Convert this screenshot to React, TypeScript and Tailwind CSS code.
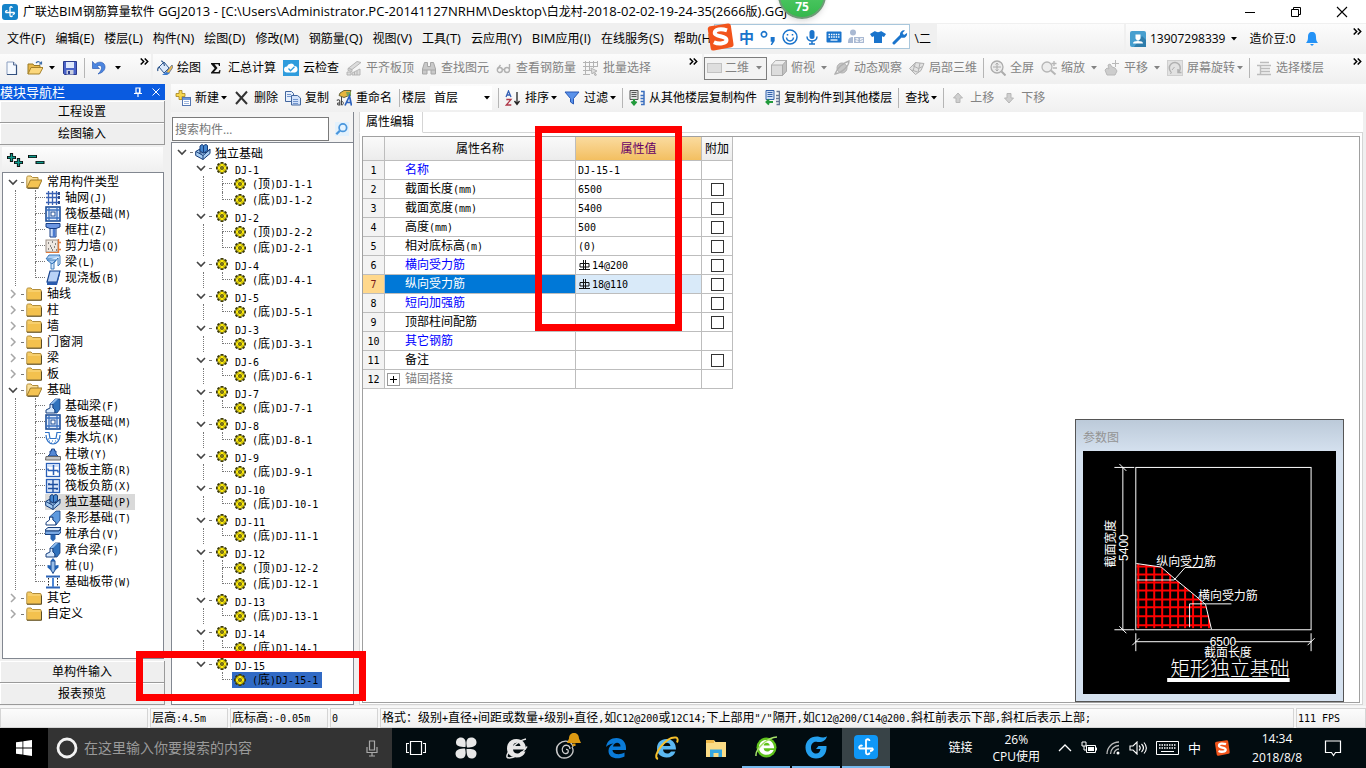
import React from "react";

/* ---------- text helpers ---------- */

function Fixed({ children }: { children: string }) {
  const parts = children.split(/([\x20-\x7e]+)/).filter(Boolean);
  return (
    <span className="whitespace-pre text-[12px] leading-4">
      {parts.map((p, i) =>
        /^[\x20-\x7e]/.test(p) ? (
          <span key={i} className="font-['DejaVu_Sans_Mono',monospace] text-[10px]">
            {p}
          </span>
        ) : (
          p
        ),
      )}
    </span>
  );
}

function Caption({ children }: { children: string }) {
  const parts = children.split(/([\x20-\x7e]+)/).filter(Boolean);
  return (
    <span className="whitespace-pre text-[12px] leading-5">
      {parts.map((p, i) =>
        /^[\x20-\x7e]/.test(p) ? (
          <span key={i} className="text-[13px]">
            {p}
          </span>
        ) : (
          p
        ),
      )}
    </span>
  );
}

/* ---------- icons ---------- */

const shapes: Record<string, React.ReactNode> = {
  app: (
    <>
      <rect x="0" y="0" width="16" height="16" rx="3" fill="#1583c9" />
      <path d="M8 3v8.500c0 1.500 2 1.500 2.400 0M3.500 8.500h9M8 3.200c1.200-.9 2.200-.2 2.200.8M3.500 8.500c0-1.800 1.200-2.200 2-1.800M12.500 8.500c0 1.500-1 2-1.800 1.700" stroke="#fff" strokeWidth="1.300" fill="none" />
    </>
  ),
  newFile: (
    <>
      <path d="M3 2h6.500l3 3v9.500H3z" fill="#f6faff" stroke="#8c9fc0" />
      <path d="M12.500 5v9.500H3" fill="none" stroke="#34517f" strokeWidth="1.200" />
      <path d="M9.500 2v3h3" fill="#c7d6ec" stroke="#5c7196" />
    </>
  ),
  open: (
    <>
      <path d="M1 14V4h5l1 1.500h6V8" fill="#e8b84b" stroke="#9a7a25" />
      <path d="M1 14l3-6.500h12L12.500 14z" fill="#fbd77c" stroke="#a5812a" />
      <path d="M9 3c2-2 4-1.500 5 .5M14.500 1.500v2.500h-2.500" fill="none" stroke="#3c6ca8" strokeWidth="1.200" />
    </>
  ),
  save: (
    <>
      <path d="M1.500 1.500h13v13h-12l-1-1z" fill="#4a63c8" stroke="#2a3a8c" />
      <rect x="4" y="2" width="8" height="6" fill="#dfe8fb" />
      <rect x="4.500" y="10" width="7" height="4.500" fill="#c9cfe0" />
      <rect x="6" y="11" width="2" height="3" fill="#2a3a8c" />
    </>
  ),
  undo: (
    <path d="M1.500 1.500v7h7L6 6.500C8.500 4.500 11 5.500 10.500 8.500c-.3 2-1.500 3.500-3.500 5.500 4-1 7-3.500 7-7 0-5-6-6.500-10-2.700z" fill="#4c86e0" stroke="#2c5cb4" strokeWidth=".7" />
  ),
  draw: (
    <>
      <path d="M2 7l5-5 5 6-5 5z" fill="#dbe8fa" stroke="#30588e" />
      <path d="M4 1c2 0 3 2 3.500 5M2 7c-1 1-1.500 3-1 4" fill="none" stroke="#30588e" strokeWidth="1.200" />
      <path d="M15 5l-5 6-1 3.500 3-1.500 4-6z" fill="#f4bf45" stroke="#5b6b92" strokeWidth=".8" />
      <path d="M9 12l-4 3h5l3-2" fill="#3b7bd0" />
    </>
  ),
  sum: <path d="M3 3h9v3h-1L10.300 4.300H6.500L9.500 8l-3.500 4h4.500l1-2h1l-.5 3.500H3V12.500L6.700 8.300 3 4z" fill="#111" />,
  cloud: (
    <>
      <rect width="16" height="16" fill="#2f9cdd" />
      <path d="M4 12.500a3 3 0 010-6 4 4 0 017.500-.5 3.300 3.300 0 01.5 6.500z" fill="#fff" />
      <path d="M5.500 8.500l2 2.200 4-4" fill="none" stroke="#2f9cdd" strokeWidth="1.300" />
    </>
  ),
  flush: (
    <g fill="#dcdcdc" stroke="#b0b0b0" strokeWidth=".9">
      <path d="M2 8.500l9-7 4 1-9 7z" />
      <path d="M2 8.500v2l4 1v-2zM1 12h4v3H1zM6 13l8-4v6H6z" />
      <path d="M8.500 12v3M11 11v4" />
    </g>
  ),
  binoc: (
    <g fill="#c9c9c9" stroke="#a6a6a6">
      <path d="M3.500 2.500h3v4h3v-4h3l2 6.500v5H10v-4H6v4H1.500V9z" />
      <path d="M1.500 10H6M10 10h4.500" />
    </g>
  ),
  glasses: (
    <g fill="none" stroke="#b1b1b1" strokeWidth="1.400">
      <circle cx="3.800" cy="10" r="2.500" />
      <circle cx="11" cy="10" r="2.500" />
      <path d="M6.300 9.500h2.200M1.500 9l3-4M13.500 9V4" />
    </g>
  ),
  batch: (
    <g fill="none" stroke="#b4b4b4">
      <path d="M2.500 1v14M6.500 1v10M10.500 1v7M14.500 1v5M0 2.500h15M0 6.500h15M0 10.500h9M0 14.500h7" />
      <path d="M8 8l6 3-2.500 1 2 3-1.500.500-1.500-3L9 14z" fill="#ddd" />
    </g>
  ),
  flat: <rect x=".5" y="3.500" width="14" height="9" fill="#dedede" stroke="#c2c2c2" />,
  cube: (
    <g stroke="#a9a9a9" strokeWidth=".9">
      <path d="M.500 5l4-4.500h11v10.500l-4 4.500h-11z" fill="#ededed" />
      <path d="M.500 5h11v10.500h-11z" fill="#dcdcdc" />
      <path d="M11.500 5l4-4.500v10.500l-4 4.500z" fill="#c2c2c2" />
    </g>
  ),
  planet: (
    <g stroke="#b0b0b0">
      <circle cx="8" cy="8" r="5" fill="#c6c6c6" />
      <path d="M1 14C3 8 9 3 15 1c0 5-7 12-14 13z" fill="none" strokeWidth="1.400" />
    </g>
  ),
  local3d: (
    <g stroke="#b0b0b0" fill="#e2e2e2">
      <path d="M.500 8.500l6-6 8.500 1-3 7-5.500 4z" />
      <path d="M3.500 5.500l6 3 4-2M6.500 2.500L4 11M11 3l-2 9.500M2.500 10l6 2" fill="none" />
    </g>
  ),
  full: (
    <g stroke="#acacac" fill="none" strokeWidth="1.300">
      <circle cx="7" cy="7" r="6" fill="#ebebeb" />
      <path d="M11.500 11.500l4 4" strokeWidth="2" />
      <path d="M7 3v8M3 7h8M5.500 4.500L7 3l1.500 1.500M5.500 9.500L7 11l1.500-1.500" strokeWidth="1" />
    </g>
  ),
  zoom: (
    <g stroke="#b6b6b6" fill="none" strokeWidth="1.300">
      <circle cx="6" cy="7" r="5" fill="#ededed" />
      <path d="M10 10.500l4.500 4" strokeWidth="2" />
      <path d="M13 1v5M10.500 3.500h5M12 8h4" />
    </g>
  ),
  pan: (
    <g stroke="#b8b8b8" fill="#cdcdcd">
      <path d="M3 15l-2-5 2-2 2 1-1-4 2-1 2 3 3 1 2 3-2 4z" />
      <path d="M11.500 0v7M8 3.500h7" fill="none" />
    </g>
  ),
  rotate: (
    <g stroke="#b0b0b0" fill="none">
      <rect x=".5" y=".5" width="15" height="15" fill="#e2e2e2" stroke="#cfcfcf" />
      <path d="M4 12a5.500 5.500 0 117 .500M11 9v3.500h3.500" strokeWidth="1.500" />
      <path d="M5 10l2.500-3M3 13.500l2-1" />
    </g>
  ),
  floors: (
    <g fill="none" stroke="#bcbcbc" strokeWidth="1.400">
      <path d="M4 2.500h9M1 5.500h14M5 8.500h9M5 11.500h9M1 14.500h14M4.500 6v8" />
    </g>
  ),
  create: (
    <>
      <path d="M4 .5h3v3h3v3H7v3H4v-3H1v-3h3z" fill="#f8d84e" stroke="#a38420" strokeWidth=".8" />
      <rect x="7.500" y="7.500" width="8" height="8" fill="#fff" stroke="#5577b2" />
      <path d="M8 8h7v2H8z" fill="#6d97dc" />
      <path d="M9 11.500h5M9 13.500h5" stroke="#9db6de" />
    </>
  ),
  del: <path d="M2 2l11 12M13 1.500L2 14" stroke="#333" strokeWidth="2" />,
  copy: (
    <g stroke="#42669e">
      <path d="M.5 1.500h6l2 2v8h-8z" fill="#e6effc" />
      <path d="M6.500 5.500h6l3 2.500v7h-9z" fill="#d2e2fa" />
      <path d="M2 4.500h4M2 6.500h4M8 9.500h5M8 11.500h5M8 13.500h5" stroke="#7295cd" />
    </g>
  ),
  rename: (
    <>
      <path d="M4 3l4-2.500h7l-2 5-5 2-5-2z" fill="#e6b53f" stroke="#5a5a32" strokeWidth=".9" />
      <path d="M10 2h5v4h-4z" fill="#7ea352" />
      <path d="M.8 10.500c2-1.500 3-.5 3 1V15c-3 .5-3-2.500 0-2.300" fill="none" stroke="#444" strokeWidth="1.100" />
      <path d="M5.500 7v8c2.500.3 2.500-4 0-3.500" fill="none" stroke="#444" />
      <path d="M9 15.500L13.500 6l2 9.500M10.500 12.500h4.500" fill="none" stroke="#2d62bd" strokeWidth="1.700" />
    </>
  ),
  sort: (
    <>
      <path d="M1 7l2.500-6L6 7M2 5h3" fill="none" stroke="#3460b5" strokeWidth="1.300" />
      <path d="M1.300 9.500H6L1.300 15h5" fill="none" stroke="#b0394a" strokeWidth="1.300" />
      <path d="M12 2v12M9.500 11l2.500 3.500 2.500-3.500" fill="none" stroke="#222" strokeWidth="1.300" />
    </>
  ),
  filter: <path d="M1 2h14L9.500 8.500V14L6.500 12V8.500z" fill="#5a92ea" stroke="#2858b5" />,
  fromFloor: (
    <>
      <path d="M1 .5h8v9H1z" fill="#e0e0e0" stroke="#555" />
      <path d="M2.500 2.500h5M2.500 4.500h5M2.500 6.500h5" stroke="#555" />
      <path d="M12 1.500h3v13h-3M11.500 5.500h4M11.500 8.500h4M11.500 11.500h4" fill="none" stroke="#3c6fbf" strokeWidth="1.500" />
      <path d="M5 9v5M2.500 11.500L5 14.500l2.500-3" stroke="#219a3b" fill="none" strokeWidth="2" />
    </>
  ),
  toFloor: (
    <>
      <path d="M2 .5h8v9H2z" fill="#cfe0f8" stroke="#3562a9" />
      <path d="M3.500 2.500h5M3.500 4.500h5M3.500 6.500h5" stroke="#3562a9" />
      <path d="M12.500 1.500h3v13h-3M12 5.500h4M12 8.500h4M12 11.500h4" fill="none" stroke="#667894" strokeWidth="1.500" />
      <path d="M9 12H3M5 9.500L2.500 12 5 14.500" stroke="#219a3b" fill="none" strokeWidth="2" />
    </>
  ),
  up: <path d="M8 3l4.500 5H10v4.500H6V8H3.500z" fill="#cfcfcf" stroke="#b7b7b7" />,
  down: <path d="M8 13L3.500 8H6V3.500h4V8h2.500z" fill="#cfcfcf" stroke="#b7b7b7" />,
  search: (
    <g fill="none" stroke="#4a96dc" strokeWidth="2">
      <circle cx="9" cy="6.500" r="4.300" fill="#e4f3ff" />
      <path d="M5.500 10l-4 4" strokeWidth="2.600" />
    </g>
  ),
  folder: (
    <>
      <path d="M.8 3.500c0-1 .5-1.500 1.500-1.500H5l1.500 1.500H14c.8 0 1.200.4 1.200 1.200V14H.8z" fill="#f7cf6c" stroke="#b28d3a" />
      <path d="M2 6h12.500v7.500H2z" fill="#f3c14e" />
      <path d="M1 14.200h14.500V5.500" stroke="#5b4c24" fill="none" />
    </>
  ),
  folderOpen: (
    <>
      <path d="M.8 13.500v-10c0-1 .5-1.500 1.500-1.500H5l1.500 1.500H12V6" fill="#fbe09a" stroke="#b28d3a" />
      <path d="M.8 13.800L4.500 6H16l-3.700 7.800z" fill="#f4c352" stroke="#9d7a2a" />
      <path d="M1.500 14.300h11" stroke="#5b4c24" />
    </>
  ),
  grid: (
    <g stroke="#3a62b4" strokeWidth="1.300">
      <path d="M3.500 1v14M7.500 1v14M11.500 1v14M1 3.500h14M1 7.500h14M1 12.500h14" />
      <path d="M14 2v3M14 6v3M14 11v3" stroke="#2b4a8c" strokeWidth="2" />
    </g>
  ),
  raft: (
    <>
      <rect x="1" y="1" width="14" height="14" fill="#e4eefb" stroke="#1f4e96" strokeWidth="1.600" />
      <path d="M4 1v14M12 1v14M1 4h14M1 12h14" stroke="#3c72c0" strokeWidth="1.300" />
      <rect x="6" y="6" width="4" height="4" fill="#fff" stroke="#1f4e96" />
    </>
  ),
  column: (
    <>
      <path d="M1 1.500h14V5l-4 1.500H5L1 5z" fill="#6d97e2" stroke="#173f86" />
      <path d="M5 6.500h6V15H5z" fill="#cfe0fa" stroke="#173f86" />
      <path d="M9 7v8" stroke="#4b7bd0" strokeWidth="2.500" />
    </>
  ),
  wall: (
    <>
      <rect x="1" y="2" width="12" height="12" fill="#eee8e2" stroke="#9b8f86" />
      <path d="M3 5h1M7 4h1M10 6h1M5 8h1M9 9h1M3 11h1M7 12h1M11 12h1M6 10h1" stroke="#222" />
      <path d="M13.500 1v14M13 4.500h3M13 11.500h3" stroke="#e07b3c" strokeWidth="1.400" />
      <path d="M1 14.500h12" stroke="#e07b3c" />
    </>
  ),
  beam: (
    <g stroke="#2e6fb4" fill="#a9cdf3" strokeWidth=".9">
      <path d="M1 5l3-4h11l-3 4z" />
      <path d="M3 6l3 2v7h3V9l4-5v8l2-2V2" fill="#d7e9fc" />
      <path d="M2 6h9l-4 4z" />
    </g>
  ),
  slab: (
    <>
      <path d="M5 1h10l-3 11H2z" fill="#b9d2f7" stroke="#1b4690" strokeWidth="1.200" />
      <path d="M2 12h10l3-11v3l-3 11H2z" fill="#2b5cae" />
    </>
  ),
  fbeam: (
    <>
      <path d="M1 15h9v-3L8 10V6H5v4l-4 2z" fill="#d6e8fc" stroke="#163f7d" />
      <path d="M5 6l5-5h5v10l-3 4h-2v-3L8 10V6z" fill="#2f72bd" stroke="#163f7d" strokeWidth=".8" />
      <path d="M5 6h3l5-5h-3z" fill="#8bb8ea" />
    </>
  ),
  pit: (
    <g fill="none" stroke="#2f73c8" strokeWidth="1.200">
      <path d="M0 2.500h4l1 6h6l1-6h4" />
      <path d="M1 5c0 5 3 9 7 9s7-4 7-9" />
      <path d="M4 11h1M7 11h1M10 11h1M6 13h1M9 13h1M3 9h1M12 9h1" />
    </g>
  ),
  pier: (
    <>
      <path d="M5 8V5h1.500V3h3v2H11v3l2 2H3z" fill="#5689d5" stroke="#1e498f" />
      <path d="M1 10.500h14.500v3.500H.5z" fill="#c6c6c6" stroke="#6b6b6b" />
    </>
  ),
  mainbar: (
    <>
      <rect x="1.500" y="1.500" width="13" height="13" fill="#fff" stroke="#2a5fb7" strokeWidth="1.300" />
      <path d="M2 2h12v3H2z" fill="#cfdff7" />
      <path d="M8.500 3v10M3 8.500h10M3 6.500v2M13 8.500v2" stroke="#2a5fb7" strokeWidth="1.500" fill="none" />
    </>
  ),
  negbar: (
    <>
      <rect x="1.500" y="1.500" width="13" height="13" fill="#dbe7fa" stroke="#2a5fb7" strokeWidth="1.300" />
      <path d="M3 6.500h10M3 10.500h10M8 2v12M4 5v1.500M12 10.500V12" stroke="#1f4f9f" strokeWidth="1.400" />
    </>
  ),
  footing: (
    <>
      <path d="M.700 7.500L5 5v4l6-.5L15 5v4.500L8 15.500.7 11.500z" fill="#a8cdf2" stroke="#153c78" />
      <path d="M1 7.500l7 4 7-6M8 11.500v4" fill="none" stroke="#153c78" />
      <path d="M5 2l2-1.500 1.500 1L11 .5l1.500 1v5L8.500 9 5 7z" fill="#4687cf" stroke="#153c78" />
      <path d="M8.500 2v6.500" stroke="#153c78" />
    </>
  ),
  strip: (
    <>
      <path d="M1 15h10v-2.500L8 10V7H4.500v3L1 12.500z" fill="#fff" stroke="#163f7d" />
      <path d="M4.500 7L11 1h4v9l-4 5v-2.500L8 10V7z" fill="#5f9ade" stroke="#163f7d" strokeWidth=".8" />
    </>
  ),
  cap: (
    <>
      <path d="M0 4l3-2.500h13L14 5H0z" fill="#d8e8fb" stroke="#163f7d" />
      <path d="M0 5h14l2-2v3l-2 2.500H0z" fill="#7aa9e3" stroke="#163f7d" />
      <path d="M5.500 8.500h5V13L8 15.500 5.500 13z" fill="#2a66b4" />
    </>
  ),
  pile: (
    <>
      <path d="M6 3h4v9l-2 3.500L6 12z" fill="#96bdea" stroke="#1c4a8e" />
      <path d="M2.500 7v2.500l3.500 3V7.500zM13.500 7v2.500l-3.500 3V7.500z" fill="#1f60b4" />
      <path d="M5.500 3L8 0l2.500 3z" fill="#1f60b4" />
    </>
  ),
  band: (
    <>
      <path d="M1 2.500h14M1 13.500h14" stroke="#2c64b8" strokeWidth="2" />
      <path d="M3.500 4v9M12.500 4v9" stroke="#222" strokeDasharray="1.500 1.500" />
      <path d="M7 4h2v9H7z" fill="#4d86d6" />
    </>
  ),
  gear: (
    <>
      <path d="M6.500 2h3v2l2-1 1.500 1.500-1 2h2v3h-2l1 2-1.500 1.500-2-1v2h-3v-2l-2 1L3 11.500l1-2H2v-3h2l-1-2L4.500 3l2 1z" fill="#3c3a08" />
      <circle cx="8" cy="8" r="4" fill="#ffee10" />
      <path d="M8 3.500v9M3.500 8h9" stroke="#ffee10" strokeWidth="1.200" />
      <path d="M6 5.500v1M10 5.500v1M6 9.500v1M10 9.500v1" stroke="#3c3a08" />
      <circle cx="8" cy="8" r="1.300" fill="#ffee10" stroke="#222" />
    </>
  ),
  bar: <path d="M2 4.500h9v3.500H2zM5.500 1v10M7.500 1v10M1 10.500h11" fill="none" stroke="#111" />,
  user: (
    <>
      <rect width="16" height="16" rx="2" fill="#479fcf" />
      <path d="M4 16h12V9l-4-4z" fill="#2f7dab" />
      <path d="M5.500 3.500h5v4l-1.500 2H7l-1.500-2zM3 12.500c0-1.800 2-2.500 5-2.500s5 .7 5 2.500z" fill="#fff" />
    </>
  ),
  bell: <path d="M8 1c-3 0-4 2-4 5 0 3-.5 4-2 6h12c-1.500-2-2-3-2-6 0-3-1-5-4-5zM6 13l2 2 2-2z" fill="#2492f6" />,
  sogou: (
    <>
      <path d="M1 3.500Q1 2 2.500 1.800L12.500.3Q14 .1 14.200 1.600L15.700 12Q16 13.500 14.500 13.800L4.500 15.700Q3 16 2.700 14.500z" fill="#f2541b" />
      <path d="M12 4.200C8.500 3 5 3.500 5 5.700c0 2.300 6.700 1.500 6.700 4 0 2-4.200 2.700-7.200 1.300" fill="none" stroke="#fff" strokeWidth="2.300" />
    </>
  ),
  smile: (
    <g fill="none" stroke="#1a74cc" strokeWidth="1.500">
      <circle cx="8" cy="8" r="7" />
      <path d="M4.500 8.500c.5 4.500 6.500 4.500 7 0M5.500 5v1.500M10.500 5v1.500" />
    </g>
  ),
  mic: (
    <g fill="#1a74cc">
      <rect x="5.500" y="1" width="5" height="9" rx="2.500" />
      <path d="M3 7.500c0 6 10 6 10 0M8 12v3M5 15h6" fill="none" stroke="#1a74cc" strokeWidth="1.500" />
    </g>
  ),
  keys: (
    <>
      <rect x=".5" y="2.500" width="15" height="11" rx="1" fill="#1a74cc" />
      <path d="M2.500 5.500h11M2.500 8h11" stroke="#fff" strokeWidth="1.300" strokeDasharray="1.500 .9" />
      <path d="M4.500 11h7" stroke="#fff" strokeWidth="1.300" />
    </>
  ),
  person: (
    <g fill="#a9b9d3">
      <circle cx="5" cy="3.500" r="3" />
      <path d="M0 14c0-4 1-6 5-6v6z" />
      <path d="M6 8h10v6H6z" />
      <path d="M7.500 9.500H10v1.500H8v1.500h2.500M15 9.500h-2.500V11H14.500v1.500H12" stroke="#fff" strokeWidth=".8" fill="none" />
    </g>
  ),
  shirt: <path d="M5 2c1 1.500 5 1.500 6 0l5 3-2 3-2-.8V14H4V7.200L2 8 0 5z" fill="#1a74cc" />,
  wrench: (
    <>
      <path d="M2 14l7-7" stroke="#1a74cc" strokeWidth="3" strokeLinecap="round" />
      <path d="M8 6a4 4 0 015-4.500L10.500 4l1.500 2 3-2a4 4 0 01-5.500 4.500z" fill="#1a74cc" />
    </>
  ),
};

function Icon({ name, className = "size-4" }: { name: string; className?: string }) {
  return (
    <svg viewBox="0 0 16 16" aria-hidden="true" className={`shrink-0 ${className}`}>
      {shapes[name]}
    </svg>
  );
}

function Caret() {
  return (
    <svg viewBox="0 0 6 4" aria-hidden="true" className="h-1 w-1.5 shrink-0">
      <path d="M0 0h6L3 3.500z" fill="currentColor" />
    </svg>
  );
}

function More() {
  return (
    <svg viewBox="0 0 9 7" aria-hidden="true" className="h-[7px] w-[9px] shrink-0 self-start">
      <path d="M.7 .5l3 3-3 3M4.700.5l3 3-3 3" fill="none" stroke="#000" strokeWidth="1.500" />
    </svg>
  );
}

/* ---------- toolbars ---------- */

type ToolProps = { icon?: string; label: string; caret?: "near" | "far"; dim?: boolean };

function Tool({ icon, label, caret, dim }: ToolProps) {
  return (
    <button type="button" className={`flex shrink-0 items-center gap-1 whitespace-nowrap ${dim ? "text-[#838383]" : "text-black"}`}>
      {icon && <Icon name={icon} />}
      <span>{label}</span>
      {caret && (
        <span className={caret === "far" ? "pl-0.5" : "-ml-0.5"}>
          <Caret />
        </span>
      )}
    </button>
  );
}

function Sep() {
  return <span className="-mx-px h-5 w-px shrink-0 bg-[#b5b5b5]" />;
}

const strip = "flex items-center bg-linear-to-b from-[#fcfcfc] to-[#f0f0f0]";

const menus = ["文件(F)", "编辑(E)", "楼层(L)", "构件(N)", "绘图(D)", "修改(M)", "钢筋量(Q)", "视图(V)", "工具(T)", "云应用(Y)", "BIM应用(I)", "在线服务(S)", "帮助(H)"];

function TitleBar() {
  return (
    <header className="relative flex h-[23px] shrink-0 items-center bg-white pl-0.5">
      <Icon name="app" />
      <h1 className="flex flex-1 items-center overflow-hidden pl-[5px]">
        <Caption>广联达BIM钢筋算量软件 GGJ2013 - [C:\Users\Administrator.PC-20141127NRHM\Desktop\白龙村-2018-02-02-19-24-35(2666版).GGJ12]</Caption>
      </h1>
      <div className="flex h-5 items-center gap-[34px] pr-[18px]">
        <button type="button" aria-label="最小化">
          <svg viewBox="0 0 12 12" className="size-3"><path d="M1 6.500h10" stroke="#000" /></svg>
        </button>
        <button type="button" aria-label="还原">
          <svg viewBox="0 0 12 12" className="size-3"><path d="M1.500 3.500h7v7h-7zM3.500 3V1.500h7v7H9" fill="none" stroke="#000" /></svg>
        </button>
        <button type="button" aria-label="关闭">
          <svg viewBox="0 0 12 12" className="size-3"><path d="M1 1l10 10M11 1L1 11" stroke="#000" strokeWidth="1.100" /></svg>
        </button>
      </div>
      <div className="absolute -top-[29px] left-[778px] z-30 flex size-12 items-end justify-center rounded-full border-2 border-[#6f9b78] bg-linear-to-b from-[#62d676] to-[#33b84c] pb-1 text-[12px] leading-3 font-bold text-white shadow-md">75</div>
    </header>
  );
}

function ImeBar() {
  return (
    <div className="absolute top-0 left-[706px] z-20 flex h-[27px] items-center">
      <Icon name="sogou" className="z-10 size-7" />
      <div className="-ml-5 flex h-[25px] items-center gap-1.5 border border-[#a9c7dc] bg-white pr-px pl-6 text-[15px] leading-5 font-bold text-[#1a74cc]">
        <span>中</span>
        <svg viewBox="0 0 12 12" className="size-4"><circle cx="3" cy="4" r="2" fill="none" stroke="#1a74cc" strokeWidth="1.200" /><path d="M8 6h3v3l-2 3H8l1-2.500H8z" fill="#1a74cc" /></svg>
        <Icon name="smile" />
        <Icon name="mic" />
        <Icon name="keys" />
        <Icon name="person" />
        <Icon name="shirt" />
        <Icon name="wrench" />
      </div>
    </div>
  );
}

function MenuBar() {
  return (
    <nav className="relative flex h-[31px] shrink-0 items-center bg-[#f0f0f0] text-[12px]">
      <div className="flex h-full items-center gap-2.5 pl-[7px]">
        {menus.map((m) => (
          <button key={m} type="button" className="whitespace-nowrap">
            <Caption>{m}</Caption>
          </button>
        ))}
      </div>
      <ImeBar />
      <span className="ml-auto pr-1.5">\二</span>
      <div className={`${strip} h-[29px] w-[187px] shrink-0`} />
      <div className={`${strip} ml-0.5 h-[29px] w-[240px] shrink-0 gap-1 pl-1`}>
        <Tool icon="user" label="13907298339" caret="far" />
        <button type="button" className="flex items-center gap-2 pl-2">
          造价豆:0
          <Icon name="bell" />
        </button>
        <span className="mr-1 ml-auto flex h-4 self-start pt-1"><More /></span>
      </div>
    </nav>
  );
}

function MainTools() {
  return (
    <div className="flex h-[30px] shrink-0 gap-0.5 bg-[#f0f0f0] pb-0.5 text-[12px]">
      <div className={`${strip} w-[151px] shrink-0 gap-[7px] pl-1`}>
        <button type="button" aria-label="新建"><Icon name="newFile" /></button>
        <button type="button" aria-label="打开" className="flex items-center gap-1.5"><Icon name="open" /><Caret /></button>
        <button type="button" aria-label="保存"><Icon name="save" /></button>
        <Sep />
        <button type="button" aria-label="撤销" className="flex items-center gap-2"><Icon name="undo" /><Caret /></button>
        <span className="mr-0.5 ml-auto self-start pt-1"><More /></span>
      </div>
      <div className={`${strip} w-[549px] shrink-0 gap-[7px] pl-1`}>
        <Tool icon="draw" label="绘图" />
        <Tool icon="sum" label="汇总计算" />
        <Tool icon="cloud" label="云检查" />
        <Tool icon="flush" label="平齐板顶" dim />
        <Tool icon="binoc" label="查找图元" dim />
        <Tool icon="glasses" label="查看钢筋量" dim />
        <Tool icon="batch" label="批量选择" dim />
        <span className="mr-1 ml-auto self-start pt-1"><More /></span>
      </div>
      <div className={`${strip} min-w-0 flex-1 gap-1 overflow-hidden`}>
        <label className="relative flex h-[23px] w-[63px] shrink-0 items-center border border-[#7d7d7d] bg-[#f3f3f3] pl-0.5 text-[#838383]">
          <Icon name="flat" />
          <select aria-label="视图模式" className="w-full appearance-none bg-transparent pl-0.5 outline-none">
            <option>二维</option>
          </select>
          <span className="pointer-events-none absolute right-1"><Caret /></span>
        </label>
        <div className="flex min-w-0 flex-1 items-center gap-[7px] self-stretch">
          <Tool icon="cube" label="俯视" caret="far" dim />
          <Tool icon="planet" label="动态观察" dim />
          <Tool icon="local3d" label="局部三维" dim />
          <Sep />
          <Tool icon="full" label="全屏" dim />
          <Tool icon="zoom" label="缩放" caret="far" dim />
          <Tool icon="pan" label="平移" caret="far" dim />
          <Tool icon="rotate" label="屏幕旋转" caret="near" dim />
          <Sep />
          <Tool icon="floors" label="选择楼层" dim />
          <span className="mr-1 ml-auto self-start pt-1"><More /></span>
        </div>
      </div>
    </div>
  );
}

function ComponentTools() {
  return (
    <div className={`${strip} h-7 shrink-0 gap-[7px] overflow-hidden pl-1 text-[12px]`}>
      <Tool icon="create" label="新建" caret="near" />
      <Tool icon="del" label="删除" />
      <Tool icon="copy" label="复制" />
      <Tool icon="rename" label="重命名" />
      <label className="flex shrink-0 items-center gap-1">
        <span className="border-l border-[#b5b5b5] pl-0.5">楼层</span>
        <span className="relative flex h-6 w-[62px] items-center bg-white">
          <select className="w-full appearance-none bg-transparent pl-1 outline-none">
            <option>首层</option>
          </select>
          <span className="pointer-events-none absolute right-0.5"><Caret /></span>
        </span>
      </label>
      <Sep />
      <Tool icon="sort" label="排序" caret="near" />
      <Tool icon="filter" label="过滤" caret="near" />
      <Sep />
      <Tool icon="fromFloor" label="从其他楼层复制构件" />
      <Tool icon="toFloor" label="复制构件到其他楼层" />
      <Sep />
      <Tool label="查找" caret="near" />
      <Sep />
      <Tool icon="up" label="上移" dim />
      <Tool icon="down" label="下移" dim />
    </div>
  );
}

/* ---------- trees ---------- */

function Chevron({ open }: { open: boolean }) {
  return (
    <svg viewBox="0 0 10 10" aria-hidden="true" className="size-2.5 shrink-0">
      {open ? (
        <path d="M1 3l4 4 4-4" fill="none" stroke="#444" strokeWidth="1.600" />
      ) : (
        <path d="M3 1l4 4-4 4" fill="none" stroke="#a6a6a6" strokeWidth="1.500" />
      )}
    </svg>
  );
}

function Dots() {
  return <span className="mx-[3px] w-0.5 shrink-0 border-t border-dotted border-[#777]" />;
}

function Elbow({ last }: { last: boolean }) {
  return (
    <span className="flex h-4 w-2.5 shrink-0 flex-col">
      <span className="h-2 border-b border-l border-dotted border-[#777]" />
      <span className={last ? "h-2" : "h-2 border-l border-dotted border-[#777]"} />
    </span>
  );
}

type Leaf = [icon: string, label: string];
type Group = { label: string; open?: boolean; items?: Leaf[] };

const modules: Group[] = [
  { label: "常用构件类型", open: true, items: [["grid", "轴网(J)"], ["raft", "筏板基础(M)"], ["column", "框柱(Z)"], ["wall", "剪力墙(Q)"], ["beam", "梁(L)"], ["slab", "现浇板(B)"]] },
  { label: "轴线" },
  { label: "柱" },
  { label: "墙" },
  { label: "门窗洞" },
  { label: "梁" },
  { label: "板" },
  {
    label: "基础",
    open: true,
    items: [["fbeam", "基础梁(F)"], ["raft", "筏板基础(M)"], ["pit", "集水坑(K)"], ["pier", "柱墩(Y)"], ["mainbar", "筏板主筋(R)"], ["negbar", "筏板负筋(X)"], ["footing", "独立基础(P)"], ["strip", "条形基础(T)"], ["cap", "桩承台(V)"], ["fbeam", "承台梁(F)"], ["pile", "桩(U)"], ["band", "基础板带(W)"]],
  },
  { label: "其它" },
  { label: "自定义" },
];

function NavPanel() {
  const wide = "h-[22px] shrink-0 border-r border-b border-[#9a9a9a] bg-[#efefef] text-center shadow-[inset_1px_1px_0_#fff]";
  return (
    <aside className="flex w-[165px] shrink-0 flex-col bg-[#f0f0f0] text-[12px]">
      <div className="flex h-4 shrink-0 items-center bg-[#0a5be0] text-[13px] leading-[15px] text-white">
        <h2 className="flex-1">模块导航栏</h2>
        <button type="button" aria-label="固定" className="px-1">
          <svg viewBox="0 0 10 10" className="size-2.5"><path d="M3 1h4v5H3zM1 6.500h8M5 6v4M6.500 1v5" fill="none" stroke="#fff" strokeWidth="1.200" /></svg>
        </button>
        <button type="button" aria-label="关闭" className="px-1">
          <svg viewBox="0 0 10 10" className="size-2.5"><path d="M1.500 1.500l7 7M8.500 1.500l-7 7" stroke="#fff" /></svg>
        </button>
      </div>
      <div className="flex flex-col pt-px pb-0.5">
        <button type="button" className={wide}>工程设置</button>
        <button type="button" className={wide}>绘图输入</button>
      </div>
      <div className="mx-0.5 flex h-[25px] shrink-0 items-center gap-1 bg-linear-to-b from-[#fdfdfd] to-[#efefef] pl-1">
        <button type="button" aria-label="全部展开">
          <svg viewBox="0 0 18 16" className="h-4 w-[18px]"><path d="M5.500 1v9M1 5.500h9M12.500 6v9M8 10.500h9" stroke="#111" strokeWidth="3.200" /><path d="M5.500 2v7M2 5.500h7M12.500 7v7M9 10.500h7" stroke="#0d9a8c" strokeWidth="1.400" /></svg>
        </button>
        <button type="button" aria-label="全部折叠">
          <svg viewBox="0 0 18 16" className="h-4 w-[18px]"><path d="M0 4.500h9M7.500 10.500h9" stroke="#111" strokeWidth="3" /><path d="M1 4.500h7M8.500 10.500h7" stroke="#0d9a8c" strokeWidth="1.400" /></svg>
        </button>
      </div>
      <ul className="mr-px ml-0.5 min-h-0 flex-1 border border-[#828790] bg-white pt-px">
        {modules.map((g) => (
          <li key={g.label}>
            <div className="flex h-4 items-center pl-[5px]">
              <Chevron open={!!g.open} />
              <Dots />
              <Icon name={g.open ? "folderOpen" : "folder"} />
              <span className="pl-[5px]"><Fixed>{g.label}</Fixed></span>
            </div>
            {g.items && (
              <ul className="ml-3 border-l border-dotted border-[#777] pl-[19px]">
                {g.items.map(([icon, label], i) => (
                  <li key={label} className="flex h-4 items-center">
                    <Elbow last={i === g.items!.length - 1} />
                    <span className={`flex h-4 items-center gap-1 pr-1 ${icon === "footing" ? "bg-[#d9d9d9]" : ""}`}>
                      <Icon name={icon} />
                      <Fixed>{label}</Fixed>
                    </span>
                  </li>
                ))}
              </ul>
            )}
          </li>
        ))}
      </ul>
      <div className="flex flex-col pt-0.5">
        <button type="button" className={wide}>单构件输入</button>
        <button type="button" className={wide}>报表预览</button>
      </div>
    </aside>
  );
}

const footings: [string, string[]][] = [
  ["DJ-1", ["(顶)DJ-1-1", "(底)DJ-1-2"]],
  ["DJ-2", ["(顶)DJ-2-2", "(底)DJ-2-1"]],
  ["DJ-4", ["(底)DJ-4-1"]],
  ["DJ-5", ["(底)DJ-5-1"]],
  ["DJ-3", ["(底)DJ-3-1"]],
  ["DJ-6", ["(底)DJ-6-1"]],
  ["DJ-7", ["(底)DJ-7-1"]],
  ["DJ-8", ["(底)DJ-8-1"]],
  ["DJ-9", ["(底)DJ-9-1"]],
  ["DJ-10", ["(底)DJ-10-1"]],
  ["DJ-11", ["(底)DJ-11-1"]],
  ["DJ-12", ["(顶)DJ-12-2", "(底)DJ-12-1"]],
  ["DJ-13", ["(底)DJ-13-1"]],
  ["DJ-14", ["(底)DJ-14-1"]],
  ["DJ-15", ["(底)DJ-15-1"]],
];

function ComponentPanel() {
  return (
    <section className="flex w-[183px] shrink-0 flex-col border-r border-[#828790] bg-[#f4f4f4] pt-1">
      <div className="flex h-[26px] shrink-0 items-center gap-1.5 pl-px">
        <input aria-label="搜索构件" placeholder="搜索构件…" className="h-6 w-[157px] border border-[#7a7a7a] bg-white px-0.5 text-[12px] outline-none placeholder:text-[#777]" />
        <button type="button" aria-label="搜索" className="bg-[#e3f1fc]"><Icon name="search" className="size-3.5" /></button>
      </div>
      <div className="min-h-0 flex-1 border border-r-0 border-[#828790] bg-white pt-px">
        <div className="flex h-4 items-center pl-[5px]">
          <Chevron open />
          <Dots />
          <Icon name="footing" />
          <span className="pl-1"><Fixed>独立基础</Fixed></span>
        </div>
        <ul>
          {footings.map(([name, kids], n) => (
            <li key={name}>
              <div className="flex h-4 items-center pl-6">
                <Chevron open />
                <Dots />
                <Icon name="gear" />
                <span className="pl-[5px]"><Fixed>{name}</Fixed></span>
              </div>
              <ul className={`ml-[31px] border-l border-dotted pl-[18px] ${n === footings.length - 1 ? "border-transparent" : "border-[#777]"}`}>
                {kids.map((k, i) => (
                  <li key={k} className="flex h-4 items-center">
                    <Elbow last={i === kids.length - 1} />
                    <span className={`flex h-4 items-center gap-1 pr-1 ${k === "(底)DJ-15-1" ? "bg-[#316ac5]" : ""}`}>
                      <Icon name="gear" />
                      <Fixed>{k}</Fixed>
                    </span>
                  </li>
                ))}
              </ul>
            </li>
          ))}
        </ul>
      </div>
    </section>
  );
}

/* ---------- property table ---------- */

type Prop = { label: string; value?: string; bar?: boolean; blue?: boolean; box?: boolean; active?: boolean; group?: boolean };

const props: Prop[] = [
  { label: "名称", value: "DJ-15-1", blue: true },
  { label: "截面长度(mm)", value: "6500", box: true },
  { label: "截面宽度(mm)", value: "5400", box: true },
  { label: "高度(mm)", value: "500", box: true },
  { label: "相对底标高(m)", value: "(0)", box: true },
  { label: "横向受力筋", value: "14@200", bar: true, blue: true, box: true },
  { label: "纵向受力筋", value: "18@110", bar: true, box: true, active: true },
  { label: "短向加强筋", blue: true, box: true },
  { label: "顶部柱间配筋", box: true },
  { label: "其它钢筋", blue: true },
  { label: "备注", box: true },
  { label: "锚固搭接", group: true },
];

function nameStyle(p: Prop) {
  if (p.active) return "bg-[#0078d7] text-white";
  if (p.blue) return "text-[#0000ff]";
  if (p.group) return "text-[#808080]";
  return "text-black";
}

function PropertyTable() {
  const cell = "border-r border-b border-[#bdbdbd] p-0";
  const head = "bg-linear-to-b from-[#fafafa] to-[#ececec] font-normal";
  return (
    <table className="w-[370px] table-fixed border-separate border-spacing-0 text-[12px] leading-4">
      <colgroup>
        <col className="w-[22px]" />
        <col className="w-[191px]" />
        <col className="w-[126px]" />
        <col className="w-[31px]" />
      </colgroup>
      <thead>
        <tr className="h-6">
          <th className={`${cell} ${head}`} />
          <th className={`${cell} ${head}`}>属性名称</th>
          <th className={`${cell} bg-linear-to-b from-[#fadb9e] to-[#f3bf60] font-normal text-[#660066]`}>属性值</th>
          <th className={`${cell} ${head} whitespace-nowrap`}>附加</th>
        </tr>
      </thead>
      <tbody>
        {props.map((p, i) => (
          <tr key={p.label} className="h-[19px]">
            <th className={`${cell} text-center font-normal ${p.active ? "bg-[#ffd88c] text-[#7a1a1a]" : "bg-[#f3f3f3]"}`}>
              <Fixed>{String(i + 1)}</Fixed>
            </th>
            <td className={`${cell} ${nameStyle(p)}`}>
              <div className="flex h-[18px] items-center">
                <span className="flex w-5 shrink-0 justify-center pr-1">
                  {p.group && (
                    <button type="button" aria-label="展开" className="flex size-[13px] items-center justify-center border border-[#999] bg-white">
                      <svg viewBox="0 0 9 9" className="size-[9px]"><path d="M4.500 1v7M1 4.500h7" stroke="#000" /></svg>
                    </button>
                  )}
                </span>
                <Fixed>{p.label}</Fixed>
              </div>
            </td>
            <td className={`${cell} ${p.active ? "bg-[#d9eaf9]" : ""}`}>
              <div className="flex h-[18px] items-center gap-0.5 pl-0.5">
                {p.bar && <svg viewBox="0 0 12 12" aria-hidden="true" className="size-3">{shapes.bar}</svg>}
                {p.value && <Fixed>{p.value}</Fixed>}
              </div>
            </td>
            <td className={cell}>
              {p.box && <input type="checkbox" aria-label={`${p.label} 附加`} className="mx-auto block size-[13px] appearance-none border border-[#333] bg-white" />}
            </td>
          </tr>
        ))}
      </tbody>
    </table>
  );
}

function ParameterWindow() {
  return (
    <section className="absolute right-[15px] bottom-0 flex h-[283px] w-[269px] flex-col border border-[#555] bg-linear-to-b from-[#bccad9] from-0% to-[#d6e2f0] to-12% px-[7px] pb-[7px]">
      <h2 className="pt-2.5 pb-[5px] text-[12px] leading-4 text-[#949494]">参数图</h2>
      <svg viewBox="0 0 253 244" className="min-h-0 w-full flex-1 bg-black font-['Liberation_Sans','Noto_Sans_CJK_SC',sans-serif]" role="img" aria-label="矩形独立基础">
        <defs>
          <clipPath id="mesh">
            <path d="M53 113l25 3.500 15 13 16 13 13.500 11.500 6 24.500H53z" />
          </clipPath>
        </defs>
        <g stroke="#f00" strokeWidth="2" clipPath="url(#mesh)">
          {[55, 63, 71, 79, 87, 95, 102, 110, 118, 126].map((x) => <path key={x} d={`M${x} 110V178`} />)}
          {[116, 124, 132, 140, 149, 157, 166, 175].map((y) => <path key={y} d={`M53 ${y}H130`} />)}
        </g>
        <g stroke="#fff" fill="none">
          <rect x="52.500" y="16.500" width="176" height="163" />
          <path d="M31 16.500h20M31 179.500h20M39.500 16v69M39.500 110v70M36 13l7 7M36 176l7 7" />
          <path d="M52.500 183v18M228.500 183v18M52 191.500h76M152 191.500h77M49 195l7-7M225 195l7-7" />
          <path d="M53 113l25 3.500 15 13 16 13 13.500 11.500 6 25" />
          <path d="M54 129.500h37l11-12.500h20M106.500 177v-23.500h42" />
        </g>
        <path d="M84 230h123" stroke="#fff" strokeWidth="4" />
        <g fill="#fff" fontSize="12">
          <text transform="translate(32 117) rotate(-90)">截面宽度</text>
          <text transform="translate(45 97) rotate(-90)" textAnchor="middle">5400</text>
          <text x="73" y="115">纵向受力筋</text>
          <text x="115" y="150">横向受力筋</text>
          <text x="140" y="196" textAnchor="middle">6500</text>
          <text x="121" y="207">截面长度</text>
          <text x="87" y="226" fontSize="20" fontWeight="300">矩形独立基础</text>
        </g>
      </svg>
    </section>
  );
}

function Workspace() {
  return (
    <main className="flex min-w-0 flex-1 flex-col pr-[3px] pl-[5px]">
      <div className="flex h-[21px] shrink-0 border-b border-[#d5d5d5] bg-white">
        <button type="button" className="h-[21px] border-x border-b border-[#d5d5d5] border-b-white bg-white px-1.5 pr-2 text-[12px]">属性编辑</button>
      </div>
      <div className="flex min-h-0 flex-1 flex-col border border-t-0 border-[#d5d5d5] bg-white px-0.5 pt-[3px] pb-px">
        <div className="relative min-h-0 flex-1 border border-[#a0a0a0] bg-white">
          <PropertyTable />
          <ParameterWindow />
        </div>
      </div>
    </main>
  );
}

/* ---------- bottom bars ---------- */

function StatusBar() {
  const cell = "flex items-center border border-[#d5d5d5] bg-linear-to-b from-[#fcfcfc] to-[#f0f0f0] pl-px whitespace-nowrap overflow-hidden";
  return (
    <footer className="flex h-[22px] shrink-0 gap-0.5 bg-[#f7f7f7] pt-0.5">
      <div className={`${cell} w-[148px]`} />
      <div className={`${cell} w-[78px]`}><Fixed>层高:4.5m</Fixed></div>
      <div className={`${cell} w-[98px]`}><Fixed>底标高:-0.05m</Fixed></div>
      <div className={`${cell} w-12`}><Fixed>0</Fixed></div>
      <div className={`${cell} min-w-0 flex-1`}>
        <Fixed>格式：级别+直径+间距或数量+级别+直径,如C12@200或12C14;下上部用"/"隔开,如C12@200/C14@200.斜杠前表示下部,斜杠后表示上部;</Fixed>
      </div>
      <div className={`${cell} w-[70px]`}><Fixed>111 FPS</Fixed></div>
    </footer>
  );
}

const ieGlyph = "M3 12.500C3 6.500 7 3 12.500 3S22 7 22 13.500H9c.3 5 6.500 5 8 2h4.500c-1.500 4-4.500 6-9 6C7 21.500 3 18 3 12.500zM9 10h7.500c-.3-4.500-7-4.500-7.500 0z";

const taskIcons: { label: string; art: React.ReactNode; state?: string }[] = [
  {
    label: "风扇",
    art: (
      <g fill="#e8e8e8">
        <path d="M11.500 11C12 7 12 1.500 7 1.500 3.500 1.500 2 4 2 6.500 2 10 5.500 11 11.500 11z" />
        <path d="M13 11.500C11.500 6 12.500 1.500 17 1.500c3.500 0 5.500 2 5.500 5C22.500 10.500 18 11.500 13 11.500z" />
        <path d="M12.500 13c6-.5 10 .5 10 4.500 0 3-2 5-5 5-4.500 0-5-4.500-5-9.500z" />
        <path d="M11 12.500c1.500 5.500.5 10-4 10-3.500 0-5.500-2-5.500-5 0-4 4.500-5 9.500-5z" />
      </g>
    ),
  },
  { label: "浏览器", art: <><path d={ieGlyph} fill="#e8e8e8" fillRule="evenodd" /><path d="M4 22C-1 20 12 5 22 3M3 21.500c5 2 16-4 20-11" stroke="#e8e8e8" strokeWidth="1.500" fill="none" /></> },
  { label: "提醒", art: <><path d="M19 11c-1-6-9-8-14-3s-2 14 5 14 11-6 8-11M16 13c0-4-5-5-7-2s0 7 3 6.500 3-4.500 0-4M8 22c-6-3-7-11-2-15" stroke="#ccc" strokeWidth="1.300" fill="none" /><path d="M20-3c-3.500 0-5 2.500-5 5.500L13 7h14l-2-4.500C25-.5 23.500-3 20-3zM18.500 7.500h3V10h-3z" fill="#dc9a12" /></> },
  { label: "Edge", art: <path d="M2 11C3 5 7 2 12.500 2 18 2 22 6 22 12v2H8.500c.5 5 7.500 5 12 2.500v4C14 24 4 22.500 4.500 14.500c.2-3 2-5.500 5-7C5.500 8 3 9.500 2 11zM9 10.500h7.500c0-5-6.500-5-7.500 0z" fill="#0a7bd8" fillRule="evenodd" /> },
  { label: "IE", art: <><path d={ieGlyph} fill="#5bb8f2" fillRule="evenodd" /><path d="M4 23C-3 21 12 0 22 1.500c2 .5 2 3 1 5" stroke="#f5c02c" strokeWidth="2" fill="none" /></> },
  { label: "资源管理器", art: <><path d="M2 4h8l1.500 2H22v15H2z" fill="#fbdc86" /><path d="M2 4h8v3H2z" fill="#efb94a" /><path d="M6 21v-7.500h12V21h-3.500v-4h-5v4z" fill="#36a7e0" /></> },
  { label: "360浏览器", state: "border-b-2 border-[#76b9ed]", art: <><circle cx="12.500" cy="12.500" r="10" fill="#5fc21c" /><path d={ieGlyph} fill="#fff" fillRule="evenodd" transform="translate(2.500 2.500) scale(.8)" /><path d="M2 21C1 14 14 2 23 2" stroke="#a6e06a" strokeWidth="1.500" fill="none" /></> },
  { label: "广联达", state: "border-b-2 border-[#76b9ed]", art: <path d="M23 1c-2 2-5 1.500-9 .5C6.500 1 1.500 6 1.500 12.500 1.500 19 6 23.500 12 23.500c6.500 0 11-4.500 10.500-12.500h-8l-2.500 3h4.500c-.5 3-2 4.500-4.500 4.500-3 0-5-2.500-5-6S9.500 6 13.500 7C18.500 7.500 22 5.500 23 1z" fill="#24a0ee" /> },
  { label: "GGJ2013", state: "border-b-2 border-[#76b9ed] bg-[#384347]", art: <><rect width="24" height="24" rx="4" fill="#0f97f6" /><path d="M12 4.500v13c0 2.500 3.500 2.500 3.500 0M5 13.500h14M12 5c2-1.500 3.500-.5 3.500 1M5 13.500c0-3 2-3.500 3.500-2.500M19 13.500c0 2-1.500 2.500-3 2.500" stroke="#fff" strokeWidth="1.800" fill="none" /></> },
];

function TaskBar() {
  return (
    <div className="flex h-10 shrink-0 items-stretch bg-[#020c10] text-[12px] leading-4 text-white">
      <button type="button" aria-label="开始" className="flex w-12 items-center justify-center bg-black">
        <svg viewBox="0 0 16 16" className="size-4"><path d="M0 2.300l6.500-.9v6.100H0zM7.300 1.300L16 0v7.500H7.300zM0 8.400h6.500v6.200L0 13.700zM7.300 8.400H16V16l-8.700-1.200z" fill="#fff" /></svg>
      </button>
      <label className="flex w-[344px] items-center gap-1.5 bg-[#333] pr-3 pl-2">
        <svg viewBox="0 0 22 22" className="size-[22px] shrink-0"><circle cx="11" cy="11" r="9" fill="none" stroke="#f2f2f2" strokeWidth="2.800" /></svg>
        <input aria-label="搜索" placeholder="在这里输入你要搜索的内容" className="min-w-0 flex-1 bg-transparent text-[14px] outline-none placeholder:text-[#9a9a9a]" />
        <svg viewBox="0 0 16 18" className="h-[18px] w-4"><path d="M5.500 2h5v9h-5zM3 8v5.500h10V8M8 13.500V17M5 17h6" fill="none" stroke="#aaa" strokeWidth="1.200" /></svg>
      </label>
      <button type="button" aria-label="任务视图" className="flex w-12 items-center justify-center">
        <svg viewBox="0 0 20 16" className="h-4 w-5"><path d="M4.500 1.500h11v13h-11zM3 3.500H.5v9H3M17 3.500h2.500v9H17" fill="none" stroke="#fff" strokeWidth="1.200" /></svg>
      </button>
      <div className="flex gap-0.5 pl-0.5">
        {taskIcons.map((t) => (
          <button key={t.label} type="button" aria-label={t.label} className={`flex w-12 items-center justify-center ${t.state ?? ""}`}>
            <svg viewBox="0 0 24 24" className="size-6 overflow-visible">{t.art}</svg>
          </button>
        ))}
      </div>
      <div className="ml-auto flex items-center gap-2 text-center whitespace-nowrap">
        <span className="pr-3">链接</span>
        <div className="flex flex-col text-[12px] leading-[17px]"><span>26%</span><span>CPU使用</span></div>
        <div className="flex items-center gap-[9px] pl-2.5">
          <svg viewBox="0 0 14 14" className="size-3.5"><path d="M1 10l6-6 6 6" fill="none" stroke="#fff" strokeWidth="1.300" /></svg>
          <svg viewBox="0 0 16 14" className="h-3.5 w-4"><path d="M5.500 4.500h9v7h-9zM15.500 6.500v3M1 1v4h4V1M2 0v2M4 0v2M3 5v4h2" fill="none" stroke="#fff" /><path d="M7 6h6v4H7z" fill="#fff" /></svg>
          <svg viewBox="0 0 14 14" className="size-3.5"><path d="M1 13A12 12 0 0113 1M4.500 13A8.500 8.500 0 0113 4.500M8 13a5 5 0 015-5" fill="none" stroke="#bbb" strokeWidth="1.300" /><circle cx="12" cy="12" r="1.500" fill="#fff" /></svg>
          <svg viewBox="0 0 18 14" className="h-3.5 w-[18px]"><path d="M1 5h3l4-4v12L4 9H1zM10 4.500c1.500 1.500 1.500 3.500 0 5M12.500 3c2.500 2.500 2.500 5.500 0 8M15 1.500c3 3.500 3 7.500 0 11" fill="none" stroke="#fff" strokeWidth="1.100" /></svg>
          <svg viewBox="0 0 23 14" className="h-3.5 w-[23px]"><path d="M.5.500h22v13H.5z" fill="none" stroke="#fff" /><path d="M3 4h17M3 7h17" stroke="#fff" strokeWidth="1.500" strokeDasharray="1.500 1" /><path d="M5 10.500h13" stroke="#fff" /></svg>
          <span className="text-[13px]">中</span>
          <span className="pl-1"><Icon name="sogou" /></span>
        </div>
        <div className="flex flex-col pl-3.5 text-[12px] leading-[19px]"><span>14:34</span><span>2018/8/8</span></div>
        <button type="button" aria-label="通知" className="pr-6 pl-3.5">
          <svg viewBox="0 0 18 18" className="size-[18px]"><path d="M1.500 2h15v11.500h-5l-2 3-2-3h-6z" fill="none" stroke="#fff" strokeWidth="1.200" /></svg>
        </button>
      </div>
    </div>
  );
}

export default function App() {
  return (
    <div className="relative flex min-h-screen flex-col overflow-hidden bg-[#f0f0f0] font-['Open_Sans','Noto_Sans_CJK_SC',sans-serif] text-black">
      <TitleBar />
      <MenuBar />
      <MainTools />
      <div className="flex min-h-0 flex-1 gap-1.5 pb-px">
        <NavPanel />
        <div className="flex min-w-0 flex-1 flex-col">
          <ComponentTools />
          <div className="flex min-h-0 flex-1">
            <ComponentPanel />
            <Workspace />
          </div>
        </div>
      </div>
      <StatusBar />
      <TaskBar />
      <div className="pointer-events-none absolute top-[126px] left-[535px] z-40 h-[205px] w-[147px] border-7 border-[#ff0000]" />
      <div className="pointer-events-none absolute top-[651px] left-[136px] z-40 h-[50px] w-[230px] border-7 border-[#ff0000]" />
    </div>
  );
}
